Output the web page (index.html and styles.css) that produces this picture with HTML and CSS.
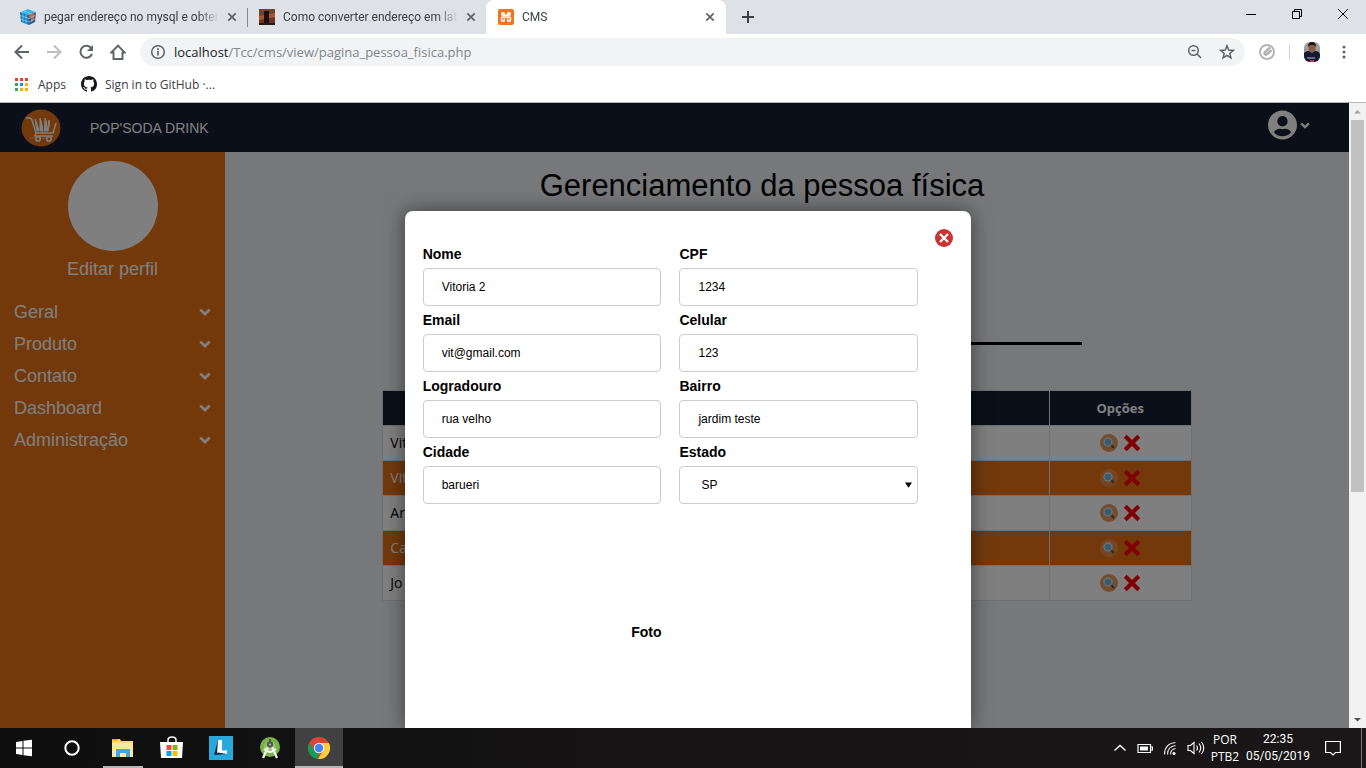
FILE: index.html
```html
<!DOCTYPE html>
<html lang="pt-BR">
<head>
<meta charset="utf-8">
<title>CMS</title>
<link rel="stylesheet" href="styles.css">
</head>
<body>
<svg class="defs" width="0" height="0" aria-hidden="true">
  <symbol id="chevron" viewBox="0 0 12 8"><path d="M1.300 1.500 6 6l4.700-4.500" fill="none" stroke="currentColor" stroke-width="2.800"/></symbol>
  <symbol id="close" viewBox="0 0 10 10"><path d="m1.300 1.300 7.400 7.400M8.700 1.300 1.300 8.700" fill="none" stroke="currentColor" stroke-width="1.700"/></symbol>
  <symbol id="lupa" viewBox="0 0 18 18"><circle cx="9" cy="9" r="9" fill="#e69a5a"/><path d="m10 10 4 4" stroke="#555" stroke-width="2"/><circle cx="8" cy="8" r="4" fill="#6fb9df" stroke="#d5e5ee" stroke-width="1.300"/></symbol>
  <symbol id="lupa-clara" viewBox="0 0 18 18"><circle cx="9" cy="9" r="9" fill="#f0a068" opacity=".6"/><path d="m10 10 4 4" stroke="#555" stroke-width="2"/><circle cx="8" cy="8" r="4" fill="#6fb9df" stroke="#d5e5ee" stroke-width="1.300"/></symbol>
  <symbol id="excluir" viewBox="0 0 16 16"><path d="m2 2 12 12M14 2 2 14" stroke="#f00" stroke-width="3.700"/></symbol>
</svg>

<header class="browser">
  <div class="tabs">
    <div class="tab">
      <svg class="fav" viewBox="0 0 16 16"><path d="M8 0l7 3-6 3-8-3z" fill="#29b6ea"/><path d="M0 3l9 3v10l-8-3z" fill="#1177b8"/><path d="M9 6l7-3-1 10-6 3z" fill="#1a5e98"/><path d="M10 5l4-1v6l-3 4V8H9z" fill="#f05a28"/><path d="M0 6.500l9 3 6-3M0 10l9 3 6-3M3 4v9.500M6 5v10M4 2l8 3" stroke="#8fd4f4" stroke-width=".7" fill="none"/></svg>
      <span class="tab-text">pegar endereço no mysql e obter</span>
      <button class="tab-close" aria-label="Fechar"><svg><use href="#close"/></svg></button>
    </div>
    <div class="tab tab-sep">
      <svg class="fav" viewBox="0 0 16 16"><path d="M0 0h16v16H0z" fill="#a75a31"/><path d="M0 0h16v4L0 7z" fill="#70442e"/><path d="M0 11l16-3v8H0z" fill="#6b3521"/><path d="M5 2h5v12H5z" fill="#171116"/><path d="M0 14h16v2H0z" fill="#26171a"/></svg>
      <span class="tab-text">Como converter endereço em lati</span>
      <button class="tab-close" aria-label="Fechar"><svg><use href="#close"/></svg></button>
    </div>
    <div class="tab tab-active">
      <svg class="fav" viewBox="0 0 16 16"><rect width="16" height="16" rx="2" fill="#ee7524"/><path d="M6.300 6.200V5q0-1.200-1.300-1.200T3.700 5q0 1.200 1.300 1.200h6q1.300 0 1.300-1.200T11 3.800 9.700 5v1.200M6.300 9.500V11q0 1.300-1.300 1.300T3.500 11V9.500Q3.500 8 5 8h6q1.500 0 1.500 1.500V11q0 1.300-1.500 1.300T9.700 11V9.500" fill="none" stroke="#fff" stroke-width="1.500"/></svg>
      <span class="tab-text">CMS</span>
      <button class="tab-close" aria-label="Fechar"><svg><use href="#close"/></svg></button>
    </div>
    <button class="new-tab" aria-label="Nova guia"><svg viewBox="0 0 12 12"><path d="M6 0v12M0 6h12" stroke="#3c4043" stroke-width="2"/></svg></button>
    <div class="win-buttons">
      <button aria-label="Minimizar"><svg viewBox="0 0 10 10"><path d="M0 5.500h10" stroke="#000"/></svg></button>
      <button aria-label="Restaurar"><svg viewBox="0 0 10 10"><path d="M.5 2.500h7v7h-7zM2.500 2V.5h7v7H8" fill="none" stroke="#000"/></svg></button>
      <button aria-label="Fechar janela"><svg viewBox="0 0 10 10"><path d="m0 0 10 10M10 0 0 10" stroke="#000"/></svg></button>
    </div>
  </div>
  <div class="toolbar">
    <button class="tool" aria-label="Voltar"><svg viewBox="0 0 16 16"><path d="M15 8H2M8 1.500 1.500 8 8 14.500" fill="none" stroke="#5f6368" stroke-width="2"/></svg></button>
    <button class="tool" aria-label="Avançar"><svg viewBox="0 0 16 16"><path d="M1 8h13M8 1.500 14.500 8 8 14.500" fill="none" stroke="#bcbec1" stroke-width="2"/></svg></button>
    <button class="tool" aria-label="Recarregar"><svg viewBox="0 0 16 16"><path d="M13.500 4.500A6 6 0 1 0 14 10" fill="none" stroke="#5f6368" stroke-width="2"/><path d="M15 1v6H9z" fill="#5f6368"/></svg></button>
    <button class="tool" aria-label="Início"><svg viewBox="0 0 16 16"><path d="M1.300 8.500 8 1.700l6.700 6.800H12.500V15h-9V8.500z" fill="none" stroke="#5f6368" stroke-width="1.900"/></svg></button>
    <div class="omnibox">
      <svg viewBox="0 0 16 16"><circle cx="8" cy="8" r="6.300" fill="none" stroke="#5f6368" stroke-width="1.500"/><path d="M8 7v4.500M8 4.300V6" stroke="#5f6368" stroke-width="1.700"/></svg>
      <span class="url"><b>localhost</b>/Tcc/cms/view/pagina_pessoa_fisica.php</span>
      <button class="tool" aria-label="Zoom"><svg viewBox="0 0 16 16"><circle cx="6.500" cy="6.500" r="4.800" fill="none" stroke="#5f6368" stroke-width="1.500"/><path d="m10 10 4 4M4.500 6.500h4" stroke="#5f6368" stroke-width="1.600"/></svg></button>
      <button class="tool" aria-label="Favorito"><svg viewBox="0 0 16 16"><path d="m8 1.800 1.700 4.300 4.600.3-3.500 3 1.100 4.500L8 11.400l-3.900 2.500 1.100-4.500-3.500-3 4.600-.3z" fill="none" stroke="#5f6368" stroke-width="1.500"/></svg></button>
    </div>
    <svg class="ext" viewBox="0 0 16 16"><circle cx="8" cy="8" r="7" fill="#fff" stroke="#b5b5b5" stroke-width="2"/><path d="M11 3.500 6 8q-1 1.200 0 2.200t2.200 0L12.500 6" fill="none" stroke="#b0b0b0" stroke-width="2.400"/></svg>
    <span class="tool-sep"></span>
    <svg class="avatar" viewBox="0 0 16 20"><clipPath id="av"><rect width="16" height="20" rx="6"/></clipPath><g clip-path="url(#av)"><path d="M0 0h16v20H0z" fill="#9a9f98"/><path d="M0 11q3-3 8-2 6-1 8 3v8H0z" fill="#141c35"/><ellipse cx="8" cy="6" rx="3.500" ry="5" fill="#8e5b48"/><path d="M4 5q0-5 4-5t4 5L10 3H6z" fill="#1a1516"/><path d="M3 15h8v2H3z" fill="#626c88"/><path d="M6 18h4v2H6z" fill="#b0394b"/></g></svg>
    <button class="tool menu" aria-label="Menu"><svg viewBox="0 0 16 16"><circle cx="8" cy="3" r="1.500"/><circle cx="8" cy="8" r="1.500"/><circle cx="8" cy="13" r="1.500"/></svg></button>
  </div>
  <nav class="bookmarks">
    <a href="#"><svg class="apps" viewBox="0 0 13 13"><path d="M0 0h3v3H0zM5 0h3v3H5zM10 0h3v3h-3z" fill="#ea4335"/><path d="M0 5h3v3H0zM0 10h3v3H0z" fill="#34a853"/><path d="M5 5h3v3H5z" fill="#2684f5"/><path d="M10 5h3v3h-3zM5 10h3v3H5zM10 10h3v3h-3z" fill="#fbae05"/></svg><span>Apps</span></a>
    <a href="#"><svg class="fav" viewBox="0 0 16 16"><path fill="#181717" d="M8 0C3.580 0 0 3.580 0 8c0 3.540 2.290 6.530 5.470 7.590.4.070.55-.17.55-.38 0-.19-.01-.82-.01-1.490-2.010.37-2.530-.49-2.690-.94-.09-.23-.48-.94-.82-1.130-.28-.15-.68-.52-.01-.53.63-.01 1.080.58 1.230.82.72 1.210 1.870.87 2.330.66.07-.52.28-.87.51-1.070-1.780-.2-3.640-.89-3.640-3.950 0-.87.31-1.590.82-2.150-.08-.2-.36-1.020.08-2.120 0 0 .67-.21 2.200.82.64-.18 1.320-.27 2-.27s1.360.09 2 .27c1.530-1.040 2.200-.82 2.200-.82.44 1.100.16 1.920.08 2.120.51.56.82 1.270.82 2.150 0 3.070-1.870 3.750-3.650 3.950.29.25.54.73.54 1.480 0 1.070-.01 1.930-.01 2.200 0 .21.15.46.55.38A8.010 8.010 0 0 0 16 8c0-4.420-3.580-8-8-8z"/></svg><span>Sign in to GitHub ·...</span></a>
  </nav>
</header>

<div class="viewport">
  <div class="page">
    <header class="topbar">
      <svg class="logo" viewBox="0 0 40 40"><ellipse cx="20" cy="20" rx="19.500" ry="18.500" fill="#e67216"/><path d="M5 10q5-1 6 2l4 13h17l3-10M15 24l-1 4h18" fill="none" stroke="#fff" stroke-width="1.500"/><path d="m14 11 1.500 3 2.500 9h-2zM19 10l1.500 4 1.500 9h-3zM24 10l1.500 4v9h-2zM28 12l.5 4-1.500 7h-1z" fill="#fff" stroke="#fff"/><path d="M8 30h22" stroke="#f5b98a" stroke-width="1"/><g fill="#e67216" stroke="#fff" stroke-width="1.500"><circle cx="17" cy="31" r="2.200"/><circle cx="28" cy="31" r="2.200"/></g></svg>
      <span class="brand">POP'SODA DRINK</span>
      <button class="user" aria-label="Usuário">
        <svg class="user-icon" viewBox="0 0 496 512"><path fill="currentColor" d="M248 8C111 8 0 119 0 256s111 248 248 248 248-111 248-248S385 8 248 8zm0 96c48.600 0 88 39.400 88 88s-39.400 88-88 88-88-39.400-88-88 39.400-88 88-88zm0 344c-58.700 0-111.300-26.600-146.500-68.200 18.800-35.400 55.600-59.800 98.500-59.800 2.400 0 4.800.4 7.100 1.100 13 4.200 26.600 6.900 40.900 6.900s28-2.700 40.900-6.900c2.300-.7 4.700-1.100 7.100-1.100 42.900 0 79.700 24.400 98.500 59.800C359.300 421.400 306.700 448 248 448z"/></svg>
        <svg class="user-arrow"><use href="#chevron"/></svg>
      </button>
    </header>
    <div class="columns">
      <aside class="sidebar">
        <div class="photo"></div>
        <a class="edit" href="#">Editar perfil</a>
        <nav class="side-nav">
          <a href="#">Geral<svg><use href="#chevron"/></svg></a>
          <a href="#">Produto<svg><use href="#chevron"/></svg></a>
          <a href="#">Contato<svg><use href="#chevron"/></svg></a>
          <a href="#">Dashboard<svg><use href="#chevron"/></svg></a>
          <a href="#">Administração<svg><use href="#chevron"/></svg></a>
        </nav>
      </aside>
      <main class="content">
        <h1>Gerenciamento da pessoa física</h1>
        <hr>
        <table>
          <thead><tr><th></th><th class="options">Opções</th></tr></thead>
          <tbody>
            <tr><td>Vit</td><td class="options"><svg><use href="#lupa"/></svg><svg class="del"><use href="#excluir"/></svg></td></tr>
            <tr><td>Vit</td><td class="options"><svg><use href="#lupa-clara"/></svg><svg class="del"><use href="#excluir"/></svg></td></tr>
            <tr><td>Ar</td><td class="options"><svg><use href="#lupa"/></svg><svg class="del"><use href="#excluir"/></svg></td></tr>
            <tr><td>Ca</td><td class="options"><svg><use href="#lupa-clara"/></svg><svg class="del"><use href="#excluir"/></svg></td></tr>
            <tr><td>Jo</td><td class="options"><svg><use href="#lupa"/></svg><svg class="del"><use href="#excluir"/></svg></td></tr>
          </tbody>
        </table>
      </main>
    </div>
    <div class="overlay">
      <section class="modal" role="dialog" aria-label="Pessoa física">
        <button class="modal-close" aria-label="Fechar"><svg viewBox="0 0 18 18"><circle cx="9" cy="9" r="9" fill="#c93535"/><path d="m5 5 8 8M13 5l-8 8" stroke="#fff" stroke-width="2.200"/></svg></button>
        <form class="form">
          <div class="field"><label for="nome">Nome</label><input id="nome" type="text" value="Vitoria 2"></div>
          <div class="field"><label for="cpf">CPF</label><input id="cpf" type="text" value="1234"></div>
          <div class="field"><label for="email">Email</label><input id="email" type="text" value="vit@gmail.com"></div>
          <div class="field"><label for="celular">Celular</label><input id="celular" type="text" value="123"></div>
          <div class="field"><label for="rua">Logradouro</label><input id="rua" type="text" value="rua velho"></div>
          <div class="field"><label for="bairro">Bairro</label><input id="bairro" type="text" value="jardim teste"></div>
          <div class="field"><label for="cidade">Cidade</label><input id="cidade" type="text" value="barueri"></div>
          <div class="field"><label for="estado">Estado</label><div class="select"><select id="estado"><option>SP</option></select><svg class="select-arrow" viewBox="0 0 8 6"><path d="M0 0h8L4 6z"/></svg></div></div>
          <div class="photo-label">Foto</div>
        </form>
      </section>
    </div>
  </div>
  <div class="scrollbar">
    <svg viewBox="0 0 17 17"><path d="M5 10.500 8.500 7l3.500 3.500z" fill="#a3a3a3"/></svg>
    <div class="track"><div class="thumb"></div></div>
    <svg viewBox="0 0 17 17"><path d="M5 7h7l-3.500 3.500z" fill="#505050"/></svg>
  </div>
</div>

<footer class="taskbar">
  <button class="task" aria-label="Iniciar"><svg viewBox="0 0 24 24"><path d="m4 6 6.500-1v6.500H4zM11.500 4.800 20 3.700v7.800h-8.500zM4 12.500h6.500V19L4 18zM11.500 12.500H20v7.800l-8.500-1.100z" fill="#fff"/></svg></button>
  <button class="task" aria-label="Cortana"><svg viewBox="0 0 24 24"><circle cx="12" cy="12" r="6.700" fill="none" stroke="#fff" stroke-width="2"/></svg></button>
  <div class="apps-row">
    <button class="task running" aria-label="Explorador"><svg viewBox="0 0 24 24"><path d="M1 3h8l1 2h12v16H1z" fill="#ffd96b"/><path d="M1 7h21v14H1z" fill="#ffe79b"/><path d="M5 13h14v8h-4v-4H9v4H5z" fill="#3ba9e0"/><path d="M1 3h6v1.500H1z" fill="#eaa82c"/></svg></button>
    <button class="task" aria-label="Store"><svg viewBox="0 0 24 24"><path d="M8 6V4q0-3 4-3t4 3v2" fill="none" stroke="#fff" stroke-width="1.500"/><path d="M0 6h23l-1 16H1z" fill="#fff"/><path d="M6.500 9h5v5h-5z" fill="#f25022"/><path d="M12.500 9h5v5h-5z" fill="#7fba00"/><path d="M6.500 15h5v5h-5z" fill="#00a4ef"/><path d="M12.500 15h5v5h-5z" fill="#ffb900"/></svg></button>
    <button class="task" aria-label="Lightshot"><svg viewBox="0 0 24 24"><path d="M0 0h24v24H0z" fill="#27a9db"/><path d="M9 4 5 19l4-2z" fill="#0c2c4c"/><path d="M9 4h4v10.500h5V18H8z" fill="#fff"/><path d="m5 19 4-2.500 9 1.500z" fill="#0c2c4c"/></svg></button>
    <button class="task" aria-label="Android Studio"><svg viewBox="0 0 24 24"><circle cx="12" cy="11" r="10" fill="#78b343"/><path d="M6 14q0-9 6-9t6 9" fill="#98ca62"/><path d="M10.500 10 5 22M13.500 10 19 22M6 13q6 6 12 0" fill="none" stroke="#f2f2f2" stroke-width="2.300"/><path d="M11 3h2v4h-2z" fill="#55585a"/><circle cx="12" cy="8.500" r="3.200" fill="#55585a"/><circle cx="12" cy="8.500" r="1.100" fill="#a6c690"/></svg></button>
    <button class="task running current" aria-label="Chrome"><svg viewBox="0 0 24 24"><circle cx="12" cy="12" r="11" fill="#db4437"/><path d="M2.500 6.500 7.200 14.700 12 17l-1 6A11 11 0 0 1 2.500 6.500z" fill="#0f9d58"/><path d="M12 7h9.800A11 11 0 0 1 11 23l5.300-8.500z" fill="#ffcd40"/><circle cx="12" cy="12" r="5.200" fill="#f1f1f1"/><circle cx="12" cy="12" r="4.200" fill="#4285f4"/></svg></button>
  </div>
  <div class="tray">
    <svg viewBox="0 0 16 16"><path d="m2.500 10.500 5.500-5 5.500 5" fill="none" stroke="#fff" stroke-width="1.400"/></svg>
    <svg viewBox="0 0 16 16"><path d="M1 4.500h12.500v8H1zM14 7h1.500v3H14" fill="none" stroke="#fff" stroke-width="1.200"/><path d="M3 6.500h8v4H3z" fill="#fff"/></svg>
    <svg viewBox="0 0 16 16"><path d="M2.500 14.500q0-11 11-12M5.500 14.500q0-8 8-9M8.500 14.500q0-5 5-6" fill="none" stroke="#ddd" stroke-width="1.200"/><circle cx="12" cy="13.500" r="1.600" fill="#fff"/></svg>
    <svg class="volume" viewBox="0 0 18 16"><path d="M1 5.500h2.500L7 2.500v11l-3.500-3H1zM9.500 5.500q2 2.500 0 5M12 3.500q3.500 4.500 0 9M14.500 2q4.500 6 0 12" fill="none" stroke="#fff" stroke-width="1.100"/></svg>
    <div class="lang">POR<br>PTB2</div>
    <div class="clock">22:35<br>05/05/2019</div>
    <svg class="notice" viewBox="0 0 16 16"><path d="M.6 1.500h14.800v11h-5L8 15l-2.500-2.500H.6z" fill="none" stroke="#fff" stroke-width="1.200"/></svg>
  </div>
</footer>
</body>
</html>
```

FILE: styles.css
```css
* { box-sizing: border-box; }
body {
  margin: 0;
  height: 100vh;
  display: flex;
  flex-direction: column;
  overflow: hidden;
  font-family: "Liberation Sans", Arial, sans-serif;
}
button { border: 0; padding: 0; background: none; color: inherit; font: inherit; }
a { color: inherit; text-decoration: none; }
svg { display: block; flex: none; }
.defs { position: absolute; }

/* Browser window */
.browser {
  flex: none;
  font-family: "Open Sans", "Noto Sans", sans-serif;
  font-size: 12px;
  color: #3c4043;
  border-bottom: 1px solid #b6b4b6;
}
.tabs { display: flex; height: 34px; padding-left: 8px; background: #dee1e6; }
.tab {
  flex: 0 1 239px;
  min-width: 0;
  display: flex;
  align-items: center;
  gap: 8px;
  padding: 0 10px 0 12px;
}
.tab-sep { background: linear-gradient(#85888c, #85888c) no-repeat 0 8px / 1px 19px; }
.tab-active { flex-basis: 240px; padding-right: 11px; background: #fff; border-radius: 8px 8px 0 0; }
.fav { width: 16px; height: 16px; }
.tab-text {
  flex: 1;
  overflow: hidden;
  white-space: nowrap;
  font-family: Roboto, "Open Sans", sans-serif;
  mask-image: linear-gradient(90deg, #000 88%, transparent);
}
.tab-close svg { width: 10px; height: 10px; color: #5f6368; }
.new-tab { width: 44px; display: flex; justify-content: center; align-items: center; }
.new-tab svg { width: 12px; height: 12px; }
.win-buttons { display: flex; margin-left: auto; height: 28px; }
.win-buttons button { width: 46px; display: flex; justify-content: center; align-items: center; }
.win-buttons svg { width: 10px; height: 10px; }
.toolbar { display: flex; align-items: center; height: 36px; padding: 0 6px; background: #fff; }
.tool { width: 32px; height: 28px; display: flex; align-items: center; justify-content: center; }
.tool svg { width: 16px; height: 16px; }
.omnibox {
  flex: 1;
  display: flex;
  align-items: center;
  height: 28px;
  margin-left: 6px;
  padding: 0 2px 0 10px;
  border-radius: 14px;
  background: #f1f3f4;
}
.omnibox > svg { width: 16px; height: 16px; }
.url { flex: 1; padding-left: 8px; font-size: 13px; color: #80868b; }
.url b { font-weight: 400; color: #202124; }
.ext { width: 16px; height: 16px; margin: 0 14px; }
.tool-sep { width: 1px; height: 16px; background: #cfd1d4; }
.avatar { width: 16px; height: 20px; margin-left: 14px; }
.menu { margin-left: 8px; fill: #5f6368; }
.bookmarks { display: flex; align-items: center; gap: 15px; height: 32px; padding: 0 15px 4px; background: #fff; }
.bookmarks a { display: flex; align-items: center; gap: 8px; }
.apps { width: 13px; height: 13px; margin-right: 2px; }

/* Page */
.viewport { flex: 1; min-height: 0; display: flex; }
.page { position: relative; flex: 1; min-width: 0; display: flex; flex-direction: column; overflow: hidden; }
.topbar { flex: none; display: flex; align-items: center; height: 49px; padding: 0 39px 0 21px; background: #141f33; color: #fff; }
.logo { width: 40px; height: 40px; }
.brand { margin-left: 29px; font-size: 14px; }
.user { margin-left: auto; display: flex; align-items: center; gap: 3px; padding-bottom: 5px; }
.user-icon { width: 29px; height: 30px; }
.user-arrow { width: 10px; height: 7px; }
.columns { flex: 1; display: flex; min-height: 0; }
.sidebar { flex: none; width: 225px; padding-top: 9px; background: #e67216; color: #fff; font-size: 18px; }
.photo { width: 90px; height: 90px; margin: 0 auto; border-radius: 50%; background: #fff; }
.edit { display: block; margin: 8px 0 17px; line-height: 20px; text-align: center; }
.side-nav a { display: flex; align-items: center; justify-content: space-between; padding: 0 14px; line-height: 32px; }
.side-nav svg { width: 12px; height: 8px; }
.content { flex: 1; min-width: 0; background: #eef0f3; }
h1 { margin: 16px 50px 0 0; font-size: 31px; font-weight: 400; line-height: 36px; text-align: center; }
hr { width: 590px; height: 3px; margin: 138px auto 45px; border: 0; background: #000; }
table { width: 72%; margin: 0 auto; border-collapse: collapse; background: #fff; font-family: "Open Sans", "Noto Sans", sans-serif; font-size: 14px; }
th, td { height: 35px; padding: 0 7px; border: 1px solid #dddfe2; text-align: left; }
td { padding-bottom: 2px; }
th { background: #141f33; color: #fff; font-size: 13px; }
tbody tr:nth-child(even) { background: #e67216; color: #fff; }
.options { width: 142px; text-align: center; }
.options svg { display: inline-block; width: 18px; height: 18px; vertical-align: middle; }
.options .del { margin-left: 5px; }

/* Dialog */
.overlay { position: absolute; inset: 0; display: flex; padding: 108px 28% 0 30%; background: rgba(0, 0, 0, .5); }
.modal { flex: 1; display: flex; flex-direction: column; padding: 18px; border-radius: 8px 8px 0 0; background: #fff; box-shadow: 0 0 20px rgba(0, 0, 0, .5); }
.modal-close { align-self: flex-end; width: 18px; height: 18px; }
.form { display: grid; grid-template-columns: 45% 45%; gap: 7px 18px; }
.field { display: flex; flex-direction: column; gap: 7px; }
.field label, .photo-label { font-size: 14px; font-weight: 700; line-height: 14px; }
.field input, .field select {
  width: 100%;
  height: 38px;
  padding: 0 18px;
  border: 1px solid #ccc;
  border-radius: 4px;
  background: #fff;
  color: #000;
  font: 12px "Liberation Sans", Arial, sans-serif;
}
.field select { padding-left: 21px; appearance: none; }
.select { position: relative; }
.select-arrow { position: absolute; right: 6px; top: 16px; width: 7px; height: 6px; }
.photo-label { margin-top: 114px; text-align: right; }

.scrollbar { flex: none; width: 17px; display: flex; flex-direction: column; background: #f1f1f1; }
.scrollbar svg { width: 17px; height: 17px; }
.track { flex: 1; padding: 0 2px; }
.thumb { height: 63%; background: #c1c1c1; }

/* Taskbar */
.taskbar { flex: none; display: flex; height: 40px; background: linear-gradient(90deg, #0f0f10, #1b1718); color: #fff; }
.task { width: 48px; height: 40px; display: flex; align-items: center; justify-content: center; }
.task svg { width: 24px; height: 24px; }
.apps-row { display: flex; gap: 1px; margin-left: 3px; }
.running { background: linear-gradient(#b5b5b5, #b5b5b5) no-repeat center bottom / 40px 2px; }
.current { background-color: #414141; background-size: 48px 2px; }
.tray { display: flex; align-items: center; margin: 0 4px 0 auto; padding-right: 20px; border-right: 1px solid #777; font: 12px/17px "Open Sans", "Noto Sans", sans-serif; text-align: center; }
.tray svg { width: 16px; height: 16px; margin-right: 9px; }
.tray .volume { width: 18px; margin: 0; }
.lang { width: 38px; margin-left: 1px; white-space: nowrap; }
.clock { width: 68px; white-space: nowrap; font-family: Roboto, "Open Sans", sans-serif; }
.tray .notice { margin: 0 0 0 13px; }
```
